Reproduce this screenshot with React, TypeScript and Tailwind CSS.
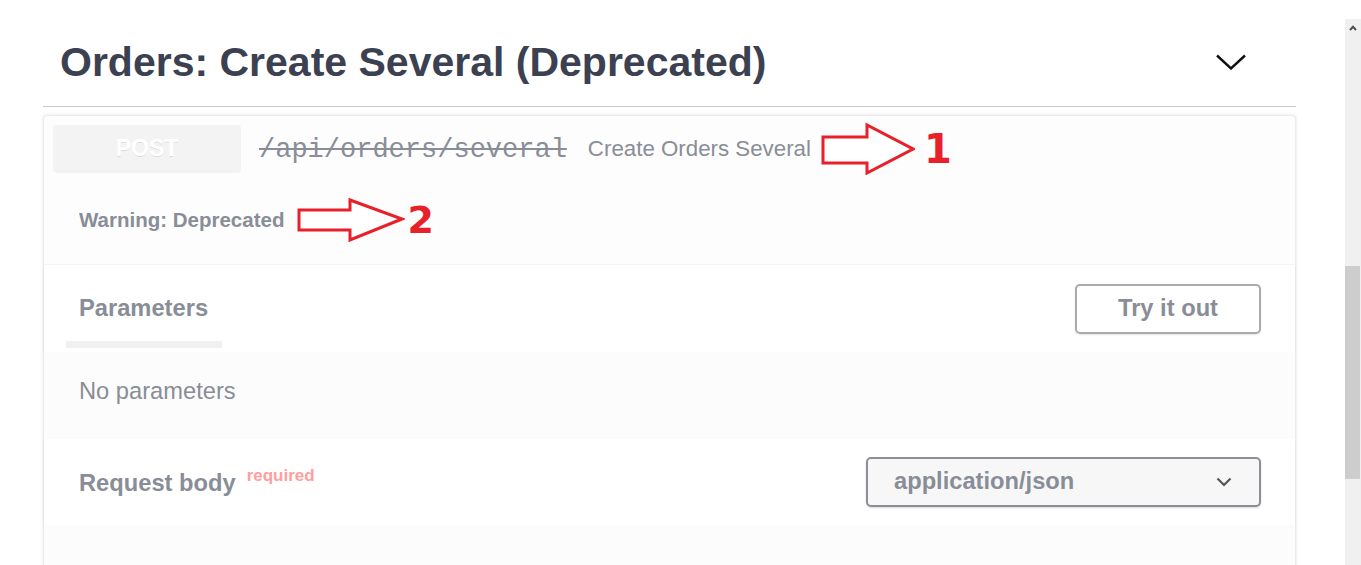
import React from 'react'

function RedArrow({ width, height, points }: { width: number; height: number; points: string }) {
  return (
    <svg width={width} height={height} viewBox={`0 0 ${width} ${height}`} className="shrink-0">
      <polygon points={points} fill="#fff" stroke="#e8202a" strokeWidth={3} strokeLinejoin="miter" />
    </svg>
  )
}

function Scrollbar() {
  return (
    <div className="mt-[19px] flex w-[16px] shrink-0 flex-col bg-[#f0f0f0]">
      <div className="flex h-[17px] items-center justify-center">
        <svg width="8" height="6" viewBox="0 0 8 6">
          <path d="M1 5 L4 1.8 L7 5" fill="none" stroke="#505050" strokeWidth="2" />
        </svg>
      </div>
      <div className="h-[230px]" />
      <div className="h-[213px] w-[15px] bg-[#cdcdcd]" />
    </div>
  )
}

export default function App() {
  return (
    <div className="flex h-[565px] w-[1361px] overflow-hidden bg-white font-['Liberation_Sans',Arial,sans-serif]">
      <main className="flex-1 pl-[43px] pr-[49px]">
        <header className="flex items-start justify-between border-b border-[#c8c8c8] pb-[23px] pl-[17px] pr-[50px] pt-[42px]">
          <h1 className="text-[41px] font-bold leading-[41px] text-[#3b4151]">Orders: Create Several (Deprecated)</h1>
          <svg className="mt-[12px]" width="30" height="16" viewBox="0 0 30 16">
            <path d="M1 1.5 L15 14.5 L29 1.5" fill="none" stroke="#111" strokeWidth="2.4" />
          </svg>
        </header>

        <section className="mt-[8px] rounded-[4px] border border-[#ececec] bg-[#fdfdfd] shadow-[0_0_3px_rgba(0,0,0,0.12)]">
          {/* summary */}
          <div className="flex items-center pl-[9px] pt-[6px]">
            <div className="flex h-[48px] w-[188px] items-center justify-center rounded-[4px] bg-[#f3f3f3] text-[23px] font-bold text-white [text-shadow:0_1px_0_rgba(0,0,0,0.1)]">
              POST
            </div>
            <span className="ml-[18px] pt-[3px] font-['Liberation_Mono',monospace] text-[27px] leading-none text-[#898d97] line-through">
              /api/orders/several
            </span>
            <span className="ml-[21px] pt-[2px] text-[22.3px] leading-none text-[#898d97]">Create Orders Several</span>
            <div className="ml-[10px]">
              <RedArrow width={94} height={53} points="2,15 46,15 46,3 92,27 46,51 46,41 2,41" />
            </div>
            <span className="ml-[9px] font-['DejaVu_Sans',sans-serif] text-[40px] font-bold leading-none text-[#e8202a]">1</span>
          </div>

          {/* deprecated warning */}
          <div className="mt-[22px] flex h-[45px] items-center pl-[35px]">
            <span className="text-[20.5px] font-bold leading-[20px] text-[#898d97]">Warning: Deprecated</span>
            <div className="ml-[13px]">
              <RedArrow width={108} height={45} points="2,13 53,13 53,3 105,22 53,43 53,33 2,33" />
            </div>
            <span className="ml-[2px] font-['DejaVu_Sans',sans-serif] text-[38px] font-bold leading-none text-[#e8202a]">2</span>
          </div>

          {/* parameters header */}
          <div className="mt-[23px] flex h-[87px] items-center justify-between bg-white/80 pl-[22px] pr-[34px] shadow-[0_-1px_0_rgba(0,0,0,0.03),0_1px_2px_rgba(0,0,0,0.06)]">
            <div className="flex flex-col self-end pb-[4px]">
              <span className="px-[13px] text-[23.7px] font-bold leading-[23.7px] text-[#898d97]">Parameters</span>
              <div className="mt-[20px] h-[7px] w-[156px] bg-[#f1f1f1]" />
            </div>
            <button className="h-[50px] w-[186px] rounded-[5px] border-2 border-[#ababab] text-[23.7px] font-bold text-[#898d97] shadow-[0_1px_2px_rgba(0,0,0,0.1)]">
              Try it out
            </button>
          </div>

          <div className="h-[87px] bg-[#fcfcfc] pl-[35px] pt-[28px]">
            <p className="text-[23.7px] leading-[22px] text-[#898d97]">No parameters</p>
          </div>

          {/* request body header */}
          <div className="flex h-[86px] items-center justify-between bg-white pl-[35px] pr-[34px] shadow-[0_1px_2px_rgba(0,0,0,0.06)]">
            <div className="mb-[2px] flex items-start">
              <span className="mt-[4px] text-[23.7px] font-bold leading-[24px] text-[#898d97]">Request body</span>
              <span className="ml-[11px] text-[17px] font-bold leading-[17px] text-[#ff9e9e]">required</span>
            </div>
            <div className="flex h-[50px] w-[395px] items-center justify-between rounded-[5px] border-2 border-[#8d8f95] bg-[#f7f7f7] pl-[26px] pr-[27px] shadow-[0_1px_2px_rgba(0,0,0,0.15)]">
              <span className="text-[23.7px] font-bold text-[#898d97]">application/json</span>
              <svg width="16" height="10" viewBox="0 0 16 10">
                <path d="M1.5 1.5 L8 8 L14.5 1.5" fill="none" stroke="#555" strokeWidth="2.2" />
              </svg>
            </div>
          </div>

          <div className="h-[80px] bg-[#fcfcfc]" />
        </section>
      </main>
      <Scrollbar />
    </div>
  )
}
